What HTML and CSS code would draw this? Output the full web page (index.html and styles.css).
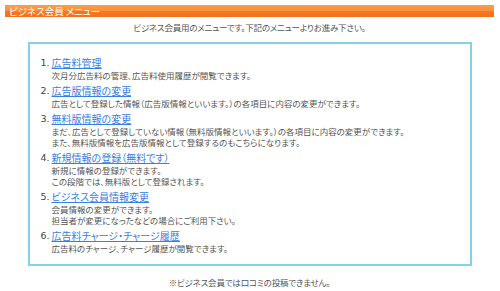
FILE: index.html
```html
<!DOCTYPE html>
<html lang="ja">
  <head>
    <meta charset="UTF-8" />
    <title>ビジネス会員 メニュー</title>
    <link rel="stylesheet" href="styles.css">
  </head>
  <body>
    <div class="titlebar">ビジネス会員 メニュー</div>
    <p class="lead">ビジネス会員用のメニューです。下記のメニューよりお進み下さい。</p>
    <div class="menu-box">
      <ol class="menu">
        <li>
          <div class="menu-head"><span class="num">1.</span><a href="#">広告料管理</a></div>
          <p class="desc">次月分広告料の管理、広告料使用履歴が閲覧できます。</p>
        </li>
        <li>
          <div class="menu-head"><span class="num">2.</span><a href="#">広告版情報の変更</a></div>
          <p class="desc">広告として登録した情報（広告版情報といいます。）の各項目に内容の変更ができます。</p>
        </li>
        <li>
          <div class="menu-head"><span class="num">3.</span><a href="#">無料版情報の変更</a></div>
          <p class="desc">まだ、広告として登録していない情報（無料版情報といいます。）の各項目に内容の変更ができます。<br>また、無料版情報を広告版情報として登録するのもこちらになります。</p>
        </li>
        <li>
          <div class="menu-head"><span class="num">4.</span><a href="#">新規情報の登録（無料です）</a></div>
          <p class="desc">新規に情報の登録ができます。<br>この段階では、無料版として登録されます。</p>
        </li>
        <li>
          <div class="menu-head"><span class="num">5.</span><a href="#">ビジネス会員情報変更</a></div>
          <p class="desc">会員情報の変更ができます。<br>担当者が変更になったなどの場合にご利用下さい。</p>
        </li>
        <li>
          <div class="menu-head"><span class="num">6.</span><a href="#">広告料チャージ・チャージ履歴</a></div>
          <p class="desc">広告料のチャージ、チャージ履歴が閲覧できます。</p>
        </li>
      </ol>
    </div>
    <p class="note">※ビジネス会員では口コミの投稿できません。</p>
  </body>
</html>
```

FILE: styles.css
```css
body {
  margin: 5px 6px 0 5px;
  background-color: #fff;
  color: #555;
  font-family: "Noto Sans CJK JP", sans-serif;
  font-feature-settings: "palt";
  font-size: 8.5px;
}
p {
  margin: 0;
}
.titlebar {
  height: 12px;
  line-height: 12px;
  padding-left: 4px;
  color: #fff;
  font-size: 9.5px;
  background: linear-gradient(#fb9d4b 0, #f98f3a 50%, #f47b22 50%, #f2701c 100%);
}
.lead {
  margin-top: 5px;
  line-height: 11px;
  text-align: center;
  letter-spacing: -0.2px;
}
.menu-box {
  width: 429px;
  margin: 9px auto 0;
  padding: 13px 0 10px 11px;
  border: 2px solid #84d2e8;
}
.menu {
  list-style: none;
  margin: 0;
  padding: 0;
}
.menu li {
  margin-bottom: 4.5px;
}
.menu li:last-child {
  margin-bottom: 0;
}
.menu-head {
  display: flex;
  height: 12.5px;
  line-height: 12.5px;
  font-size: 10px;
}
.num {
  width: 11px;
  color: #444;
  font-family: "DejaVu Sans", sans-serif;
  font-size: 9.5px;
}
.menu-head a {
  color: #3a80e2;
  text-decoration: underline;
}
.desc {
  margin-left: 11px;
  line-height: 11px;
}
.note {
  margin-top: 11px;
  line-height: 11px;
  text-align: center;
  letter-spacing: -0.2px;
}
```
